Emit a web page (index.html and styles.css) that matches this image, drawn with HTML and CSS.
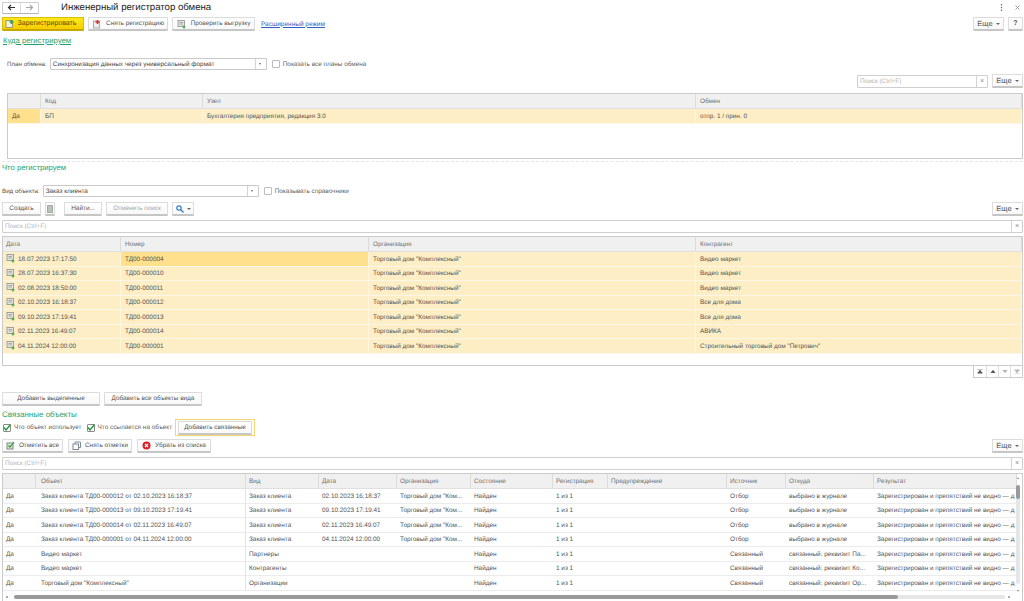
FILE: index.html
```html
<!DOCTYPE html>
<html lang="ru">
<head>
<meta charset="utf-8">
<title>Инженерный регистратор обмена</title>
<link rel="stylesheet" href="styles.css">
</head>
<body>
<svg width="0" height="0" class="defs">
  <defs>
    <symbol id="doc" viewBox="0 0 10 10">
      <rect x="1" y="1.500" width="6.500" height="6" fill="#e3e3e3" stroke="#8f8f8f" stroke-width=".8"/>
      <path d="M2.500 3.500h3.500M2.500 5h3.500" stroke="#8f8f8f" stroke-width=".7"/>
      <path d="M5.500 8h3M7 6.500v3" stroke="#3aa53a" stroke-width="1.200"/>
    </symbol>
  </defs>
</svg>
<div class="page">
  <header class="titlebar">
    <div class="nav">
      <span class="nav-btn"><svg width="9" height="7" viewBox="0 0 9 7"><path d="M8 3.500H2M4 1 1.500 3.500 4 6" fill="none" stroke="#333" stroke-width="1.200"/></svg></span>
      <span class="nav-btn"><svg width="9" height="7" viewBox="0 0 9 7"><path d="M1 3.500h6M5 1l2.500 2.500L5 6" fill="none" stroke="#a5a5a5" stroke-width="1.200"/></svg></span>
    </div>
    <h1 class="title">Инженерный регистратор обмена</h1>
    <div class="win">
      <svg width="3" height="7" viewBox="0 0 3 7"><path d="M1.500 0v1.500M1.500 2.800v1.500M1.500 5.500V7" stroke="#777" stroke-width="1.300"/></svg>
      <svg width="5" height="5" viewBox="0 0 5 5"><path d="M.5.5l4 4M4.500.5l-4 4" stroke="#999" stroke-width=".9"/></svg>
    </div>
  </header>

  <div class="bar cmd">
    <button class="btn primary w82"><svg class="ic" width="10" height="10" viewBox="0 0 10 10"><rect x="1" y="1.500" width="6.500" height="7" fill="#f2f2e8" stroke="#8a8a60" stroke-width=".8"/><path d="M4.500 3h4M6.500 1v4" stroke="#2ea44f" stroke-width="1.500"/></svg>Зарегистрировать</button>
    <button class="btn w80"><svg class="ic" width="10" height="10" viewBox="0 0 10 10"><rect x="1.500" y="2" width="6" height="7" fill="#eee" stroke="#999" stroke-width=".8"/><path d="M3.500 3h4M5.500 1v4" stroke="#d8342a" stroke-width="1.500"/></svg>Снять регистрацию</button>
    <button class="btn w83"><svg class="ic" width="10" height="10"><use href="#doc"/></svg>Проверить выгрузку</button>
    <a class="link" href="#">Расширенный режим</a>
    <span class="spacer"></span>
    <button class="btn more">Еще <i class="caret"></i></button>
    <button class="btn help">?</button>
  </div>

  <h2 class="section underlined s1">Куда регистрируем</h2>

  <div class="field-row plan">
    <label class="lbl">План обмена:</label>
    <div class="select w217"><span class="val">Синхронизация данных через универсальный формат</span><i class="drop"></i></div>
    <label class="check"><span class="box"></span>Показать все планы обмена</label>
  </div>

  <div class="bar search-right">
    <span class="spacer"></span>
    <div class="search w131"><span class="ph">Поиск (Ctrl+F)</span><span class="clear">×</span></div>
    <button class="btn more">Еще <i class="caret"></i></button>
  </div>

  <div class="table t1">
    <div class="row head"><span></span><span>Код</span><span>Узел</span><span>Обмен</span></div>
    <div class="row sel"><span class="cur">Да</span><span>БП</span><span>Бухгалтерия предприятия, редакция 3.0</span><span>отпр. 1 / прин. 0</span></div>
  </div>

  <div class="dash"></div>
  <h2 class="section s2">Что регистрируем</h2>

  <div class="field-row kind">
    <label class="lbl">Вид объекта:</label>
    <div class="select w216"><span class="val">Заказ клиента</span><i class="drop"></i></div>
    <label class="check"><span class="box"></span>Показывать справочники</label>
  </div>

  <div class="bar tools1">
    <button class="btn w39">Создать</button>
    <button class="btn w10 off"><svg width="6" height="8" viewBox="0 0 7 9"><rect x=".5" y=".5" width="6" height="8" fill="#b9c4b9" stroke="#9aa39a"/></svg></button>
    <button class="btn w38 g9">Найти...</button>
    <button class="btn w62 off">Отменить поиск</button>
    <button class="btn w22"><svg width="8" height="8" viewBox="0 0 8 8"><circle cx="3" cy="3" r="2.200" fill="none" stroke="#2b79c2" stroke-width="1.200"/><path d="M4.500 4.500 7.500 7.500" stroke="#2b79c2" stroke-width="1.300"/></svg><i class="caret"></i></button>
    <span class="spacer"></span>
    <button class="btn more">Еще <i class="caret"></i></button>
  </div>

  <div class="search full s-a"><span class="ph">Поиск (Ctrl+F)</span><span class="clear">×</span></div>

  <div class="table t2">
    <div class="row head"><span>Дата</span><span>Номер</span><span>Организация</span><span>Контрагент</span></div>
    <div class="row sel"><span><svg class="di" width="10" height="10"><use href="#doc"/></svg>18.07.2023 17:17:50</span><span class="cur">ТД00-000004</span><span>Торговый дом "Комплексный"</span><span>Видео маркет</span></div>
    <div class="row sel"><span><svg class="di" width="10" height="10"><use href="#doc"/></svg>28.07.2023 16:37:30</span><span>ТД00-000010</span><span>Торговый дом "Комплексный"</span><span>Видео маркет</span></div>
    <div class="row sel"><span><svg class="di" width="10" height="10"><use href="#doc"/></svg>02.08.2023 18:50:00</span><span>ТД00-000011</span><span>Торговый дом "Комплексный"</span><span>Видео маркет</span></div>
    <div class="row sel"><span><svg class="di" width="10" height="10"><use href="#doc"/></svg>02.10.2023 16:18:37</span><span>ТД00-000012</span><span>Торговый дом "Комплексный"</span><span>Все для дома</span></div>
    <div class="row sel"><span><svg class="di" width="10" height="10"><use href="#doc"/></svg>09.10.2023 17:19:41</span><span>ТД00-000013</span><span>Торговый дом "Комплексный"</span><span>Все для дома</span></div>
    <div class="row sel"><span><svg class="di" width="10" height="10"><use href="#doc"/></svg>02.11.2023 16:49:07</span><span>ТД00-000014</span><span>Торговый дом "Комплексный"</span><span>АВИКА</span></div>
    <div class="row sel"><span><svg class="di" width="10" height="10"><use href="#doc"/></svg>04.11.2024 12:00:00</span><span>ТД00-000001</span><span>Торговый дом "Комплексный"</span><span>Строительный торговый дом "Петрович"</span></div>
  </div>
  <div class="pager">
    <span class="pg"><svg width="6" height="5" viewBox="0 0 8 7"><path d="M0 .5h8M4 1.500 7.500 6h-7z" fill="#555" stroke="#555" stroke-width=".6"/></svg></span>
    <span class="pg"><svg width="6" height="5" viewBox="0 0 8 7"><path d="M4 1 7.500 5.500h-7z" fill="#555"/></svg></span>
    <span class="pg"><svg width="6" height="5" viewBox="0 0 8 7"><path d="M4 6 7.500 1.500h-7z" fill="#b5b5b5"/></svg></span>
    <span class="pg"><svg width="6" height="5" viewBox="0 0 8 7"><path d="M0 6.500h8M4 5.500 7.500 1h-7z" fill="#b5b5b5" stroke="#b5b5b5" stroke-width=".6"/></svg></span>
  </div>

  <div class="bar adds">
    <button class="btn w98">Добавить выделенные</button>
    <button class="btn w98">Добавить все объекты вида</button>
  </div>

  <h2 class="section s3">Связанные объекты</h2>

  <div class="linked">
    <label class="check"><span class="box on"><svg width="8" height="7" viewBox="0 0 8 7"><path d="M1 3.500 3 6 7.500.5" fill="none" stroke="#1f9d3a" stroke-width="1.400"/></svg></span>Что объект использует</label>
    <label class="check"><span class="box on"><svg width="8" height="7" viewBox="0 0 8 7"><path d="M1 3.500 3 6 7.500.5" fill="none" stroke="#1f9d3a" stroke-width="1.400"/></svg></span>Что ссылается на объект</label>
    <span class="focus"><button class="btn w74">Добавить связанные</button></span>
  </div>

  <div class="bar tools2">
    <button class="btn w61"><svg class="ic" width="9" height="9" viewBox="0 0 9 9"><rect x="1" y="2" width="6" height="6" fill="#dbe6d8" stroke="#7d8b7d"/><path d="M2.500 4.500 4 6 8 1" fill="none" stroke="#2e9b3a" stroke-width="1.200"/></svg>Отметить все</button>
    <button class="btn w64"><svg class="ic" width="9" height="9" viewBox="0 0 9 9"><rect x="1" y="3" width="5.500" height="5.500" fill="#fff" stroke="#7e8a96"/><path d="M3 2.500V1h5.500v5.500H7" fill="none" stroke="#7e8a96"/></svg>Снять отметки</button>
    <button class="btn w74"><svg class="ic" width="9" height="9" viewBox="0 0 9 9"><circle cx="4.500" cy="4.500" r="4" fill="#d8232a"/><path d="M3 3l3 3M6 3 3 6" stroke="#fff" stroke-width="1.100"/></svg>Убрать из списка</button>
    <span class="spacer"></span>
    <button class="btn more">Еще <i class="caret"></i></button>
  </div>

  <div class="search full s-b"><span class="ph">Поиск (Ctrl+F)</span><span class="clear">×</span></div>

  <div class="table t3">
    <div class="row head"><span></span><span>Объект</span><span>Вид</span><span>Дата</span><span>Организация</span><span>Состояние</span><span>Регистрация</span><span>Предупреждение</span><span>Источник</span><span>Откуда</span><span>Результат</span></div>
    <div class="row"><span>Да</span><span>Заказ клиента ТД00-000012 от 02.10.2023 16:18:37</span><span>Заказ клиента</span><span>02.10.2023 16:18:37</span><span>Торговый дом "Ком...</span><span>Найден</span><span>1 из 1</span><span></span><span>Отбор</span><span>выбрано в журнале</span><span>Зарегистрирован и препятствий не видно — д</span></div>
    <div class="row"><span>Да</span><span>Заказ клиента ТД00-000013 от 09.10.2023 17:19:41</span><span>Заказ клиента</span><span>09.10.2023 17:19:41</span><span>Торговый дом "Ком...</span><span>Найден</span><span>1 из 1</span><span></span><span>Отбор</span><span>выбрано в журнале</span><span>Зарегистрирован и препятствий не видно — д</span></div>
    <div class="row"><span>Да</span><span>Заказ клиента ТД00-000014 от 02.11.2023 16:49:07</span><span>Заказ клиента</span><span>02.11.2023 16:49:07</span><span>Торговый дом "Ком...</span><span>Найден</span><span>1 из 1</span><span></span><span>Отбор</span><span>выбрано в журнале</span><span>Зарегистрирован и препятствий не видно — д</span></div>
    <div class="row"><span>Да</span><span>Заказ клиента ТД00-000001 от 04.11.2024 12:00:00</span><span>Заказ клиента</span><span>04.11.2024 12:00:00</span><span>Торговый дом "Ком...</span><span>Найден</span><span>1 из 1</span><span></span><span>Отбор</span><span>выбрано в журнале</span><span>Зарегистрирован и препятствий не видно — д</span></div>
    <div class="row"><span>Да</span><span>Видео маркет</span><span>Партнеры</span><span></span><span></span><span>Найден</span><span>1 из 1</span><span></span><span>Связанный</span><span>связанный: реквизит Па...</span><span>Зарегистрирован и препятствий не видно — д</span></div>
    <div class="row"><span>Да</span><span>Видео маркет</span><span>Контрагенты</span><span></span><span></span><span>Найден</span><span>1 из 1</span><span></span><span>Связанный</span><span>связанный: реквизит Ко...</span><span>Зарегистрирован и препятствий не видно — д</span></div>
    <div class="row"><span>Да</span><span>Торговый дом "Комплексный"</span><span>Организации</span><span></span><span></span><span>Найден</span><span>1 из 1</span><span></span><span>Связанный</span><span>связанный: реквизит Ор...</span><span>Зарегистрирован и препятствий не видно — д</span></div>
    <div class="vscroll"><i class="up"></i><i class="vthumb"></i><i class="down"></i></div>
    <div class="hscroll"><i class="hthumb"></i></div>
  </div>
</div>
</body>
</html>
```

FILE: styles.css
```css
* { box-sizing: border-box; }
html, body { margin: 0; padding: 0; background: #fff; }
body {
  width: 1024px; height: 601px; overflow: hidden;
  font-family: "Liberation Sans", Arial, sans-serif;
  font-size: 6.4px; color: #555;
  text-rendering: geometricPrecision;
}
.defs { position: absolute; }
.page { display: flex; flex-direction: column; height: 601px; padding: 0 1px 0 2px; }
.spacer { flex: 1; }

.titlebar { display: flex; align-items: center; height: 14px; flex: none; }
.nav { display: flex; width: 37px; height: 12px; margin-top: 1px; border: 1px solid #cfcfcf; border-bottom-color: #b5b5b5; border-radius: 1px; }
.nav-btn { flex: 1; display: flex; align-items: center; justify-content: center; }
.nav-btn + .nav-btn { border-left: 1px solid #ddd; }
.title { margin: 0 0 0 22px; font-size: 9.600px; font-weight: 400; color: #222; }
.win { margin-left: auto; display: flex; align-items: center; gap: 12px; padding-right: 3px; }

.bar { display: flex; align-items: center; gap: 4px; flex: none; }
.btn {
  height: 14px; padding: 0; display: inline-flex; align-items: center; justify-content: center; flex: none;
  font: 6.400px "Liberation Sans", Arial, sans-serif; color: #555;
  text-rendering: geometricPrecision;
  background: linear-gradient(#fff, #f8f8f8);
  border: 1px solid #dcdcdc; border-bottom: 2px solid #c6c6c6; border-radius: 1px;
}
.btn.primary { font-size: 7px; background: linear-gradient(#ffe81a, #f6cd00); border-color: #dcc000; border-bottom-color: #c7a800; color: #5a4a00; }
.btn.off { color: #a5a5a5; }
.ic { margin-right: 4px; flex: none; }
.primary .ic { margin-right: 3px; margin-left: -5px; }
.w82 { width: 82px; } .w80 { width: 80px; } .w83 { width: 83px; }
.w39 { width: 39px; } .w10 { width: 10px; } .w38 { width: 38px; } .w62 { width: 62px; }
.w22 { width: 22px; } .w98 { width: 98px; } .w61 { width: 61px; } .w64 { width: 64px; } .w74 { width: 74px; }
.g9 { margin-left: 5px; }
.more { width: 31px; font-size: 7.500px; }
.help { width: 15px; font-weight: 700; font-size: 7px; }
.caret { display: inline-block; margin-left: 3px; border: 2px solid transparent; border-top: 2.500px solid #666; border-bottom: 0; }
.link { margin-left: 2px; color: #2f5fc0; text-decoration: underline; font-size: 6.500px; }

.cmd { margin-top: 3px; }
.section { margin: 0; font-weight: 400; font-size: 7.700px; line-height: 10px; color: #1fa36c; flex: none; }
.underlined { text-decoration: underline; }
.s1 { margin-top: 5px; padding-left: 1px; }
.s2 { margin-top: 1px; }
.s3 { margin-top: 4px; font-size: 8px; }

.field-row { display: flex; align-items: center; flex: none; }
.plan { margin-top: 12px; padding-left: 5px; height: 12px; }
.kind { margin-top: 12px; height: 12px; }
.lbl { margin-right: 3px; white-space: nowrap; font-size: 6.200px; }
.select { height: 12px; display: flex; align-items: center; border: 1px solid #c9c9c9; border-radius: 1px; background: #fff; }
.w217 { width: 217px; } .w216 { width: 216px; }
.val { flex: 1; padding-left: 2px; color: #444; white-space: nowrap; }
.drop { width: 11px; height: 100%; border-left: 1px solid #d4d4d4; position: relative; }
.drop::after { content: ""; position: absolute; left: 3px; top: 4px; border: 1.500px solid transparent; border-top: 2px solid #666; border-bottom: 0; }
.check { display: inline-flex; align-items: center; white-space: nowrap; color: #5f5f5f; }
.box { width: 8px; height: 8px; margin-right: 3px; border: 1px solid #bdbdbd; border-radius: 1px; background: #fff; display: inline-flex; align-items: center; justify-content: center; }
.box.on { border-color: #8a8a8a; }
.box svg { flex: none; }
.field-row .check { margin-left: 5px; }

.search-right { margin-top: 4px; }
.search { height: 13px; display: flex; align-items: center; border: 1px solid #cfcfcf; border-radius: 1px; background: #fff; }
.w131 { width: 131px; }
.full { flex: none; }
.ph { flex: 1; padding-left: 2px; color: #b5b5b5; }
.clear { width: 11px; height: 100%; display: flex; align-items: center; justify-content: center; border-left: 1px solid #d4d4d4; color: #888; font-size: 7px; }

.table { position: relative; flex: none; border: 1px solid #cbcbcb; overflow: hidden; background: #fff; }
.row { display: grid; height: 14.500px; align-items: stretch; border-bottom: 1px solid #ececec; }
.row > span { display: flex; align-items: center; padding-left: 3px; white-space: nowrap; overflow: hidden; min-width: 0; }
.row:not(.head) > span { padding-top: 1px; }
.head { background: #f0f0f0; border-bottom: 1px solid #e0e0e0; color: #707070; height: 15px; }
.head > span { border-right: 1px solid #dcdcdc; }
.sel { background: #fdeec6; border-bottom: 1px solid #fbf6e8; }
.sel > span { border-right: 1px solid #fff6dd; }
.cur { background: #ffe08c; }

.t1 { margin: 5px 0 0 5px; height: 66px; }
.t1 .row { grid-template-columns: 33px 162px 493px 1fr; }
.t1 .row > span { padding-left: 4px; }
.dash { flex: none; margin-top: 2px; height: 0; border-top: 1px dashed #e6e6e6; }

.tools1 { margin-top: 5px; }
.s-a { margin-top: 4px; }
.t2 { margin-top: 3px; height: 130px; }
.t2 .row { grid-template-columns: 118px 248px 327px 1fr; }
.t2 .row > span { padding-left: 4px; }
.t2 .row > span:first-child { padding-left: 3px; }
.di { margin: -2px 2px 0 0; flex: none; }
.pager { align-self: flex-end; display: flex; flex: none; height: 12px; border: 1px solid #cbcbcb; border-top: 0; }
.pg { width: 12px; display: flex; align-items: center; justify-content: center; }
.pg + .pg { border-left: 1px solid #dedede; }

.adds { margin-top: 14px; gap: 4px; }
.linked { display: flex; align-items: center; gap: 5px; margin-top: -1px; height: 17px; padding-left: 1px; flex: none; }
.linked .box { width: 8px; height: 8px; }
.focus { margin-left: -2px; width: 80px; height: 17px; align-items: center; justify-content: center; border: 1px solid #f6d66a; display: inline-flex; }
.tools2 { margin-top: 3px; gap: 5px; }
.s-b { margin-top: 4px; }
.t3 { margin-top: 3px; height: 128px; border-bottom: 0; }
.t3 .row { grid-template-columns: 33px 210px 73px 78px 74px 82px 55px 119px 59px 88px 143px; width: 1014px; }
.t3 .row > span:nth-child(2) { padding-left: 5px; }
.t3 .row:not(.head) > span:nth-child(2) { border-right: 1px solid #e3e3e3; }
.vscroll { position: absolute; right: 1px; top: 3px; bottom: 9px; width: 5px; }
.vscroll .up, .vscroll .down { position: absolute; left: 1px; border: 1.500px solid transparent; }
.up { top: 0; border-bottom: 2px solid #888 !important; border-top: 0 !important; }
.down { bottom: 0; border-top: 2px solid #888 !important; border-bottom: 0 !important; }
.vthumb { position: absolute; top: 8px; bottom: 8px; left: 0; width: 4px; background: #e6e6e6; border-radius: 2px; }
.vthumb::before { content: ""; position: absolute; top: 0; left: 0; width: 4px; height: 14px; background: #9a9a9a; border-radius: 2px; }
.hscroll { position: absolute; left: 11px; right: 17px; bottom: 2px; height: 4px; background: #e6e6e6; border-radius: 2px; }
.hscroll::before, .hscroll::after { content: ""; position: absolute; top: 1px; width: 2px; height: 2px; background: #aaa; }
.hscroll::before { left: -8px; }
.hscroll::after { right: -5px; }
.hthumb { display: block; width: 884px; height: 100%; background: #9a9a9a; border-radius: 2px; }
```
